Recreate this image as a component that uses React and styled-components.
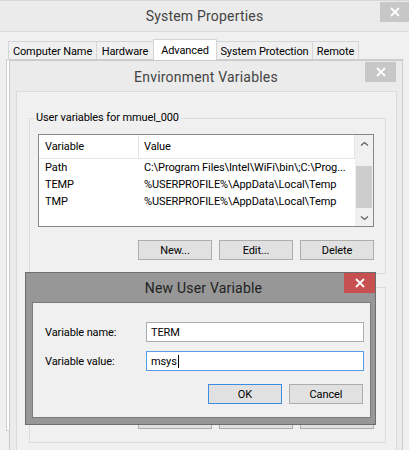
import React from 'react';
import styled, { createGlobalStyle } from 'styled-components';

const GlobalStyle = createGlobalStyle`
  html, body {
    margin: 0;
    padding: 0;
  }
  body {
    background: #f0f0f0;
    font-family: Roboto, "Liberation Sans", sans-serif;
    font-size: 11px;
    letter-spacing: -0.1px;
    color: #000;
  }
  * {
    box-sizing: border-box;
  }
`;

const Desktop = styled.div`
  position: relative;
  width: 409px;
  height: 450px;
  overflow: hidden;
  background: #f0f0f0;
`;

const SysWindow = styled.div`
  display: flex;
  flex-direction: column;
  height: 450px;
  background: #ebebeb;
  border-top: 1px solid #d6d6d6;
`;

const FloatingWindow = styled.div`
  position: absolute;
  left: ${p => p.$x}px;
  top: ${p => p.$y}px;
  width: ${p => p.$w}px;
  height: ${p => p.$h}px;
  display: flex;
  flex-direction: column;
  background: ${p => p.$frame};
  border: 1px solid ${p => p.$edge};
`;

const TitleBar = styled.div`
  flex: none;
  display: grid;
  grid-template-columns: 1fr auto 1fr;
  height: ${p => p.$h}px;
`;

const Title = styled.div`
  grid-column: 2;
  align-self: center;
  margin-top: ${p => p.$dy || 0}px;
  padding-left: ${p => p.$shift || 0}px;
  font-size: 14px;
  letter-spacing: 0.2px;
  color: ${p => p.$color};
  white-space: nowrap;
`;

const CloseButton = styled.div`
  grid-column: 3;
  justify-self: end;
  align-self: start;
  width: ${p => p.$w}px;
  height: 20px;
  margin: ${p => p.$mt}px ${p => p.$mr}px 0 0;
  background: ${p => p.$bg};
  display: flex;
  align-items: center;
  justify-content: center;
`;

const SysClient = styled.div`
  flex: 1;
  display: flex;
  flex-direction: column;
  background: #f0f0f0;
  border-top: 1px solid #dadada;
  padding: 7px 6px 0 6px;
`;

const TabStrip = styled.div`
  position: relative;
  z-index: 1;
  display: flex;
  align-items: flex-end;
  height: 21px;
  margin-bottom: -1px;
  padding-left: 2px;
`;

const Tab = styled.div`
  position: relative;
  z-index: ${p => (p.$active ? 1 : 0)};
  width: ${p => p.$w}px;
  height: ${p => (p.$active ? 21 : 18)}px;
  margin: 0 -1px ${p => (p.$active ? 0 : 1)}px 0;
  padding-top: ${p => (p.$active ? 0 : 2)}px;
  border: 1px solid #d5d5d5;
  border-bottom: none;
  background: ${p => (p.$active ? '#fff' : '#f0f0f0')};
  display: flex;
  align-items: center;
  justify-content: center;
  white-space: nowrap;
`;

const TabPanel = styled.div`
  height: 372px;
  background: #fff;
  border: 1px solid #cfcfcf;
`;

const Client = styled.div`
  flex: 1;
  display: flex;
  flex-direction: column;
  margin: ${p => p.$m};
  background: #f0f0f0;
  border: 1px solid ${p => p.$edge};
`;

const Group = styled.fieldset`
  min-width: 0;
  margin: ${p => p.$mt}px 10px 0 12px;
  padding: 9px 11px 13px 8px;
  border: 1px solid #dcdcdc;
`;

const GroupLabel = styled.legend`
  margin-left: -4px;
  padding: 0 2px;
  line-height: 14px;
  min-height: 14px;
`;

const ListBox = styled.div`
  display: flex;
  height: 93px;
  background: #fff;
  border: 1px solid #828790;
`;

const ListMain = styled.div`
  flex: 1;
  min-width: 0;
  display: flex;
  flex-direction: column;
`;

const HeaderRow = styled.div`
  display: flex;
  height: 24px;
  border-bottom: 1px solid #e5e5e5;
  border-right: 1px solid #e5e5e5;
`;

const HeaderCell = styled.div`
  display: flex;
  align-items: center;
  width: ${p => (p.$w ? `${p.$w}px` : 'auto')};
  flex: ${p => (p.$w ? 'none' : 1)};
  padding-left: ${p => p.$pad}px;
  border-right: ${p => (p.$w ? '1px solid #e5e5e5' : 'none')};
`;

const Row = styled.div`
  display: flex;
  height: 17px;
  align-items: center;
`;

const Cell = styled.div`
  width: ${p => (p.$w ? `${p.$w}px` : 'auto')};
  flex: ${p => (p.$w ? 'none' : 1)};
  min-width: 0;
  padding-left: ${p => p.$pad}px;
  white-space: nowrap;
  overflow: hidden;
`;

const ScrollBar = styled.div`
  flex: none;
  width: 18px;
  display: flex;
  flex-direction: column;
  background: #f0f0f0;
`;

const ScrollArrow = styled.div`
  height: 17px;
  display: flex;
  align-items: center;
  justify-content: center;
`;

const ScrollTrack = styled.div`
  flex: 1;
  padding: 14px 1px 0 1px;
`;

const ScrollThumb = styled.div`
  height: 42px;
  background: #cdcdcd;
`;

const ButtonRow = styled.div`
  display: flex;
  justify-content: flex-end;
  gap: 7px;
  margin-top: 13px;
  margin-right: ${p => p.$mr || 0}px;
`;

const Button = styled.div`
  width: 74px;
  height: 20px;
  display: flex;
  align-items: center;
  justify-content: center;
  background: #e1e1e1;
  border: 1px solid ${p => (p.$default ? '#3d8ee0' : '#adadad')};
`;

const DialogBody = styled.div`
  padding: 19px 6px 12px 12px;
`;

const Form = styled.div`
  display: grid;
  grid-template-columns: 101px 218px;
  row-gap: 9px;
  align-items: center;
`;

const TextBox = styled.div`
  height: 20px;
  display: flex;
  align-items: center;
  padding-left: 4px;
  background: #fff;
  border: 1px solid ${p => (p.$focused ? '#569de5' : '#abadb3')};
`;

const Caret = styled.span`
  display: inline-block;
  width: 1px;
  height: 13px;
  margin-left: 1px;
  background: #000;
`;

function CloseGlyph() {
  return (
    <svg width="10" height="10" viewBox="0 0 10 10">
      <path d="M1 1 L9 9 M9 1 L1 9" stroke="#fff" strokeWidth="1.8" fill="none" />
    </svg>
  );
}

function Chevron({ down }) {
  return (
    <svg width="9" height="6" viewBox="0 0 9 6">
      <polyline
        points={down ? '1,1.5 4.5,4.5 8,1.5' : '1,4.5 4.5,1.5 8,4.5'}
        stroke="#606060"
        strokeWidth="1.3"
        fill="none"
      />
    </svg>
  );
}

const tabs = [
  ['Computer Name', 89],
  ['Hardware', 58],
  ['Advanced', 64, true],
  ['System Protection', 97],
  ['Remote', 47],
];

const userVars = [
  ['Path', 'C:\\Program Files\\Intel\\WiFi\\bin\\;C:\\Prog...'],
  ['TEMP', '%USERPROFILE%\\AppData\\Local\\Temp'],
  ['TMP', '%USERPROFILE%\\AppData\\Local\\Temp'],
];

const listButtons = ['New...', 'Edit...', 'Delete'];

function VariableList({ rows, showHeader }) {
  return (
    <ListBox>
      <ListMain>
        <HeaderRow>
          <HeaderCell $w={100} $pad={6}>{showHeader && 'Variable'}</HeaderCell>
          <HeaderCell $pad={5}>{showHeader && 'Value'}</HeaderCell>
        </HeaderRow>
        {rows.map(([name, value]) => (
          <Row key={name}>
            <Cell $w={100} $pad={6}>{name}</Cell>
            <Cell $pad={5}>{value}</Cell>
          </Row>
        ))}
      </ListMain>
      <ScrollBar>
        <ScrollArrow><Chevron /></ScrollArrow>
        <ScrollTrack><ScrollThumb /></ScrollTrack>
        <ScrollArrow><Chevron down /></ScrollArrow>
      </ScrollBar>
    </ListBox>
  );
}

// the second group sits behind the dialog, so only its frame is drawn
function VariableGroup({ label, rows, top, covered }) {
  return (
    <Group $mt={top}>
      <GroupLabel>{label}</GroupLabel>
      <VariableList rows={rows} showHeader={!covered} />
      <ButtonRow>
        {listButtons.map(b => (
          <Button key={b}>{!covered && b}</Button>
        ))}
      </ButtonRow>
    </Group>
  );
}

export default function App() {
  return (
    <Desktop>
      <GlobalStyle />

      <SysWindow>
        <TitleBar $h={30}>
          <Title $color="#444">System Properties</Title>
          <CloseButton $w={29} $mt={1} $mr={0} $bg="#c7c7c7">
            <CloseGlyph />
          </CloseButton>
        </TitleBar>
        <SysClient>
          <TabStrip>
            {tabs.map(([name, w, active]) => (
              <Tab key={name} $w={w} $active={active}>{name}</Tab>
            ))}
          </TabStrip>
          <TabPanel />
        </SysClient>
      </SysWindow>

      <FloatingWindow $x={9} $y={60} $w={394} $h={400} $frame="#ebebeb" $edge="#cacaca">
        <TitleBar $h={30}>
          <Title $color="#444" $dy={2}>Environment Variables</Title>
          <CloseButton $w={31} $mt={1} $mr={6} $bg="#c7c7c7">
            <CloseGlyph />
          </CloseButton>
        </TitleBar>
        <Client $m="0 5px 0 6px" $edge="#dadada">
          <VariableGroup label="User variables for mmuel_000" rows={userVars} top={19} />
          <VariableGroup label="" rows={[]} top={6} covered />
        </Client>
      </FloatingWindow>

      <FloatingWindow $x={25} $y={272} $w={351} $h={153} $frame="#979797" $edge="#6e6e6e">
        <TitleBar $h={29}>
          <Title $color="#222" $shift={6}>New User Variable</Title>
          <CloseButton $w={31} $mt={0} $mr={0} $bg="#c75050">
            <CloseGlyph />
          </CloseButton>
        </TitleBar>
        <Client $m="0 4px 6px 6px" $edge="#7b7b7b">
          <DialogBody>
            <Form>
              <span>Variable name:</span>
              <TextBox>TERM</TextBox>
              <span>Variable value:</span>
              <TextBox $focused>msys<Caret /></TextBox>
            </Form>
            <ButtonRow $mr={1}>
              <Button $default>OK</Button>
              <Button>Cancel</Button>
            </ButtonRow>
          </DialogBody>
        </Client>
      </FloatingWindow>
    </Desktop>
  );
}
